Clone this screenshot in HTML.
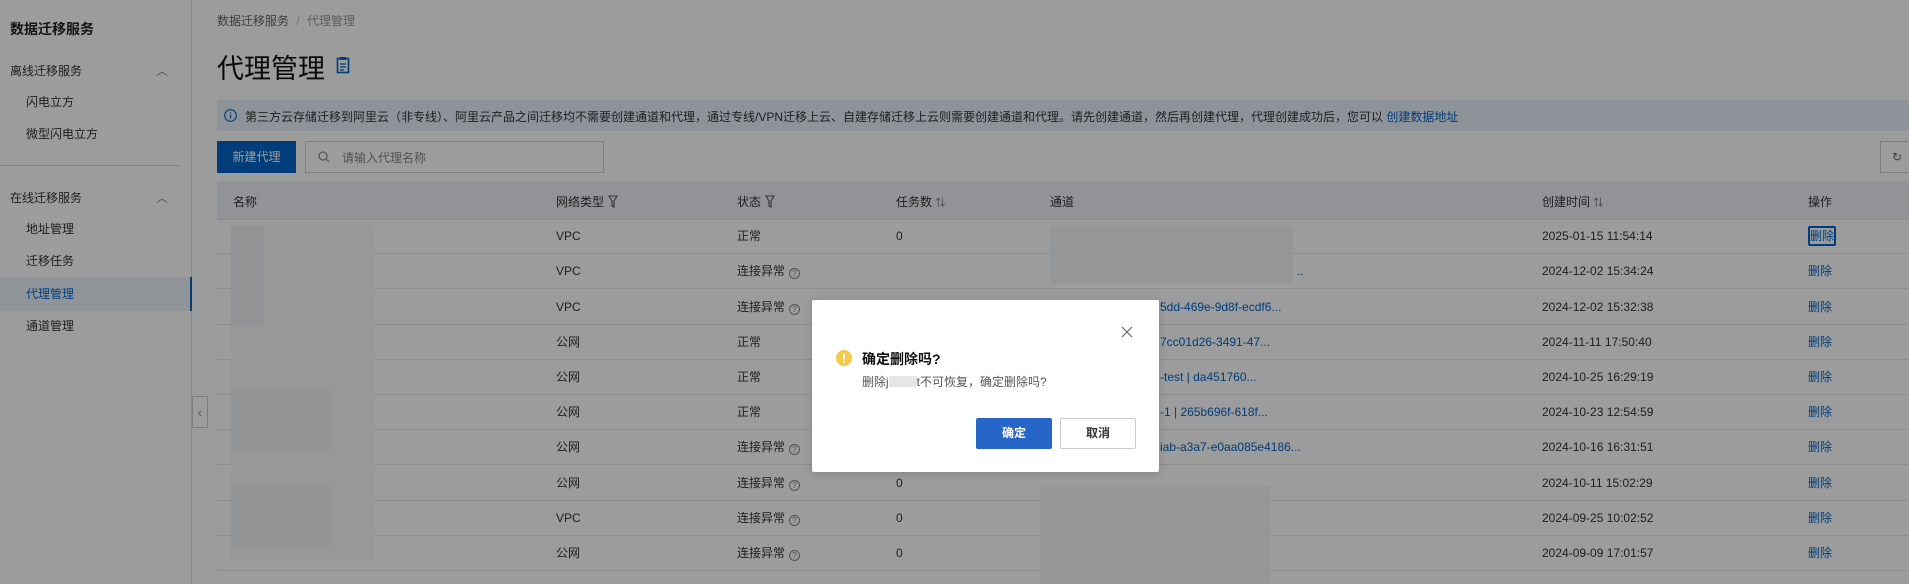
<!DOCTYPE html>
<html><head><meta charset="utf-8"><style>
*{box-sizing:border-box;margin:0;padding:0}
body{width:1909px;height:584px;overflow:hidden;position:relative;background:#fff;font-family:"Liberation Sans","Noto Sans CJK SC",sans-serif;color:#333;font-size:12px}
.a{position:absolute;white-space:nowrap}
.side{position:absolute;left:0;top:0;width:192px;height:584px;border-right:1px solid #dcdcdc;background:#fff}
.lnk{color:#0064c8}
.row{position:absolute;left:217px;right:0;height:35px;border-bottom:1px solid #e6e6e6}
.c{position:absolute;top:0;line-height:35px;white-space:nowrap}
.q{display:inline-block;width:11px;height:11px;border:1px solid #888;border-radius:50%;font-size:8px;line-height:9px;text-align:center;color:#888;margin-left:4px;vertical-align:-1px}
.ov{position:absolute;left:0;top:0;width:1909px;height:584px;background:rgba(0,0,0,0.39)}
.fn{display:inline-block;vertical-align:-2px;margin-left:4px}
</style></head><body>
<div class="side">
<div class="a" style="left:10px;top:19px;font-size:14px;font-weight:bold;color:#222">数据迁移服务</div>
<div class="a" style="left:10px;top:62px;font-size:12px">离线迁移服务</div>
<div class="a" style="left:156px;top:62px;font-size:12px;color:#888">︿</div>
<div class="a" style="left:26px;top:93px">闪电立方</div>
<div class="a" style="left:26px;top:125px">微型闪电立方</div>
<div style="position:absolute;left:0;top:165px;width:180px;border-top:1px solid #ddd"></div>
<div class="a" style="left:10px;top:189px">在线迁移服务</div>
<div class="a" style="left:156px;top:189px;color:#888">︿</div>
<div class="a" style="left:26px;top:220px">地址管理</div>
<div class="a" style="left:26px;top:252px">迁移任务</div>
<div style="position:absolute;left:0;top:277px;width:192px;height:34px;background:#eef3fb;border-right:2px solid #0064c8"></div>
<div class="a lnk" style="left:26px;top:285px">代理管理</div>
<div class="a" style="left:26px;top:317px">通道管理</div>
</div>
<div style="position:absolute;left:192px;top:396px;width:16px;height:32px;border:1px solid #ccc;background:#fff;color:#999;text-align:center;line-height:30px;font-size:14px">‹</div>

<div class="a" style="left:217px;top:12px;color:#666">数据迁移服务 <span style="color:#bbb;margin:0 4px">/</span> <span style="color:#999">代理管理</span></div>
<div class="a" style="left:217px;top:47px;font-size:27px;color:#111">代理管理</div>
<svg class="a" style="left:336px;top:56px" width="14" height="18" viewBox="0 0 14 18"><rect x="1.5" y="2.5" width="11" height="14" fill="none" stroke="#0064c8" stroke-width="1.6"/><rect x="4" y="1" width="6" height="3" fill="#0064c8"/><path d="M4 8h6M4 11h6M4 14h4" stroke="#0064c8" stroke-width="1.3"/></svg>

<div style="position:absolute;left:217px;top:100px;width:1692px;height:31px;background:#e9f0fb"></div>
<svg class="a" style="left:224px;top:109px" width="13" height="13" viewBox="0 0 13 13"><circle cx="6.5" cy="6.5" r="5.8" fill="none" stroke="#0064c8" stroke-width="1.1"/><path d="M6.5 5.5v4M6.5 3.3v1" stroke="#0064c8" stroke-width="1.2"/></svg>
<div class="a" style="left:245px;top:108px;font-size:12px">第三方云存储迁移到阿里云（非专线）、阿里云产品之间迁移均不需要创建通道和代理，通过专线/VPN迁移上云、自建存储迁移上云则需要创建通道和代理。请先创建通道，然后再创建代理，代理创建成功后，您可以 <span class="lnk">创建数据地址</span></div>

<div class="a" style="left:217px;top:141px;width:79px;height:32px;background:#0064c8;color:#fff;text-align:center;line-height:32px">新建代理</div>
<div class="a" style="left:305px;top:141px;width:299px;height:32px;border:1px solid #d0d0d0;background:#fff"></div>
<svg class="a" style="left:318px;top:151px" width="12" height="12" viewBox="0 0 12 12"><circle cx="5" cy="5" r="4" fill="none" stroke="#888" stroke-width="1.2"/><path d="M8 8l3 3" stroke="#888" stroke-width="1.2"/></svg>
<div class="a" style="left:342px;top:149px;color:#888">请输入代理名称</div>
<div class="a" style="left:1880px;top:141px;width:40px;height:32px;border:1px solid #ccc;background:#fff;color:#666;padding-left:11px;line-height:30px">↻</div>

<div style="position:absolute;left:217px;top:181px;width:1692px;height:39px;background:#eef1f6;border-bottom:1px solid #dfe3ea"></div>
<div class="a" style="left:233px;top:193px">名称</div>
<div class="a" style="left:556px;top:193px">网络类型<svg class="fn" width="10" height="13" viewBox="0 0 10 13"><path d="M1 1h8L6 6v6L4 11V6z" fill="none" stroke="#555" stroke-width="1.1"/></svg></div>
<div class="a" style="left:737px;top:193px">状态<svg class="fn" width="10" height="13" viewBox="0 0 10 13"><path d="M1 1h8L6 6v6L4 11V6z" fill="none" stroke="#555" stroke-width="1.1"/></svg></div>
<div class="a" style="left:896px;top:193px">任务数 <span style="color:#666;font-size:10px">⇅</span></div>
<div class="a" style="left:1050px;top:193px">通道</div>
<div class="a" style="left:1542px;top:193px">创建时间 <span style="color:#666;font-size:10px">⇅</span></div>
<div class="a" style="left:1808px;top:193px">操作</div>

<div class="row" style="top:219px"><div class="c" style="left:339px">VPC</div><div class="c" style="left:520px">正常</div><div class="c" style="left:679px">0</div><div class="c" style="left:1325px">2025-01-15 11:54:14</div><div class="c" style="left:1591px"><span class="lnk" style="border:2px solid #0064c8;border-radius:2px;padding:1px 0">删除</span></div></div>
<div class="row" style="top:254px"><div class="c" style="left:339px">VPC</div><div class="c" style="left:520px">连接异常<span class="q">?</span></div><div class="c lnk" style="left:1080px">..</div><div class="c" style="left:1325px">2024-12-02 15:34:24</div><div class="c lnk" style="left:1591px">删除</div></div>
<div class="row" style="top:290px"><div class="c" style="left:339px">VPC</div><div class="c" style="left:520px">连接异常<span class="q">?</span></div><div class="c lnk" style="left:943px">5dd-469e-9d8f-ecdf6...</div><div class="c" style="left:1325px">2024-12-02 15:32:38</div><div class="c lnk" style="left:1591px">删除</div></div>
<div class="row" style="top:325px"><div class="c" style="left:339px">公网</div><div class="c" style="left:520px">正常</div><div class="c lnk" style="left:943px">7cc01d26-3491-47...</div><div class="c" style="left:1325px">2024-11-11 17:50:40</div><div class="c lnk" style="left:1591px">删除</div></div>
<div class="row" style="top:360px"><div class="c" style="left:339px">公网</div><div class="c" style="left:520px">正常</div><div class="c lnk" style="left:943px">-test | da451760...</div><div class="c" style="left:1325px">2024-10-25 16:29:19</div><div class="c lnk" style="left:1591px">删除</div></div>
<div class="row" style="top:395px"><div class="c" style="left:339px">公网</div><div class="c" style="left:520px">正常</div><div class="c lnk" style="left:943px">-1 | 265b696f-618f...</div><div class="c" style="left:1325px">2024-10-23 12:54:59</div><div class="c lnk" style="left:1591px">删除</div></div>
<div class="row" style="top:430px"><div class="c" style="left:339px">公网</div><div class="c" style="left:520px">连接异常<span class="q">?</span></div><div class="c lnk" style="left:943px">iab-a3a7-e0aa085e4186...</div><div class="c" style="left:1325px">2024-10-16 16:31:51</div><div class="c lnk" style="left:1591px">删除</div></div>
<div class="row" style="top:466px"><div class="c" style="left:339px">公网</div><div class="c" style="left:520px">连接异常<span class="q">?</span></div><div class="c" style="left:679px">0</div><div class="c" style="left:1325px">2024-10-11 15:02:29</div><div class="c lnk" style="left:1591px">删除</div></div>
<div class="row" style="top:501px"><div class="c" style="left:339px">VPC</div><div class="c" style="left:520px">连接异常<span class="q">?</span></div><div class="c" style="left:679px">0</div><div class="c" style="left:1325px">2024-09-25 10:02:52</div><div class="c lnk" style="left:1591px">删除</div></div>
<div class="row" style="top:536px"><div class="c" style="left:339px">公网</div><div class="c" style="left:520px">连接异常<span class="q">?</span></div><div class="c" style="left:679px">0</div><div class="c" style="left:1325px">2024-09-09 17:01:57</div><div class="c lnk" style="left:1591px">删除</div></div>

<div style="position:absolute;left:231px;top:225px;width:144px;height:335px;background:#f8f8f9"></div>
<div style="position:absolute;left:231px;top:225px;width:33px;height:100px;background:#f0f1f4"></div>
<div style="position:absolute;left:231px;top:390px;width:100px;height:60px;background:#f1f2f5"></div>
<div style="position:absolute;left:231px;top:486px;width:100px;height:60px;background:#f1f2f5"></div>
<div style="position:absolute;left:1050px;top:225px;width:243px;height:58px;background:#f4f5f7;border-radius:4px"></div>
<div style="position:absolute;left:1040px;top:486px;width:230px;height:98px;background:#f6f6f7"></div>

<div class="ov"></div>

<div style="position:absolute;left:812px;top:300px;width:347px;height:172px;background:#fff;border-radius:2px;box-shadow:0 2px 8px rgba(0,0,0,.15)">
<svg class="a" style="left:309px;top:26px" width="12" height="12" viewBox="0 0 12 12"><path d="M1 1l10 10M11 1L1 11" stroke="#666" stroke-width="1.2"/></svg>
<svg class="a" style="left:24px;top:50px" width="16" height="16" viewBox="0 0 16 16"><circle cx="8" cy="8" r="8" fill="#f7c948"/><rect x="7" y="3.5" width="2" height="6" rx="1" fill="#fff"/><circle cx="8" cy="12" r="1.1" fill="#fff"/></svg>
<div class="a" style="left:50px;top:49px;font-size:14px;font-weight:bold;color:#111">确定删除吗?</div>
<div class="a" style="left:50px;top:73px;font-size:12px;color:#555">删除j<span style="display:inline-block;width:28px;height:11px;background:#e6e6e6;vertical-align:-1px"></span>t不可恢复，确定删除吗?</div>
<div class="a" style="left:164px;top:118px;width:76px;height:31px;background:#2666c8;color:#fff;text-align:center;line-height:31px;font-weight:bold;border-radius:2px">确定</div>
<div class="a" style="left:248px;top:118px;width:76px;height:31px;border:1px solid #ccc;color:#333;text-align:center;line-height:29px;border-radius:2px;font-weight:bold">取消</div>
</div>
</body></html>
